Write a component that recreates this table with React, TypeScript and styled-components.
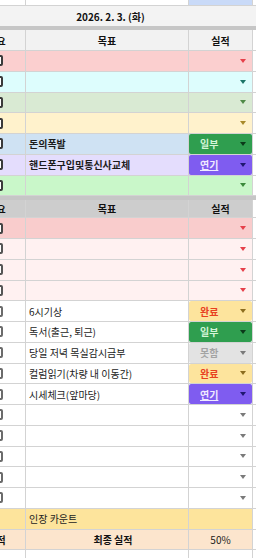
import React, { FC } from 'react';
import styled, { createGlobalStyle } from 'styled-components';

type Status = '완료' | '일부' | '못함' | '연기';

const STATUS: Record<Status, { bg: string; fg: string; arrow: string; underline?: boolean }> = {
  완료: { bg: '#fde49d', fg: '#e8401f', arrow: '#8c6d1f' },
  일부: { bg: '#2f9e4f', fg: '#d5f5d8', arrow: '#0b3a1a' },
  못함: { bg: '#e3e3e3', fg: '#a3a3a3', arrow: '#7a7a7a' },
  연기: { bg: '#7f5cf0', fg: '#efeaff', arrow: '#1f1770', underline: true },
};

type Task = {
  bg?: string;
  arrow?: string;
  text?: string;
  bold?: boolean;
  status?: Status;
  box?: string;
};

const RED = '#e6404a';
const GRAY = '#7a7a7a';

const morning: Task[] = [
  { bg: '#fbcfcf', arrow: RED, box: '#3a3a3a' },
  { bg: '#ddfdfd', arrow: '#1b7568', box: '#3a3a3a' },
  { bg: '#d9ead3', arrow: '#4f8a47', box: '#3a3a3a' },
  { bg: '#fff2cc', arrow: '#a88a2a', box: '#3a3a3a' },
  { bg: '#cfe2f3', text: '돈의폭발', bold: true, status: '일부', box: '#3a3a3a' },
  { bg: '#e4ddfd', text: '핸드폰구입및통신사교체', bold: true, status: '연기', box: '#3a3a3a' },
  { bg: '#c9f7c9', arrow: '#3b8a3b', box: '#3a3a3a' },
];

const daily: Task[] = [
  { bg: '#f9cccc', arrow: RED, box: '#444' },
  { bg: '#fff1f1', arrow: RED, box: '#555' },
  { bg: '#fff1f1', arrow: RED, box: '#555' },
  { bg: '#fff1f1', arrow: RED, box: '#555' },
  { text: '6시기상', status: '완료' },
  { text: '독서(출근, 퇴근)', status: '일부' },
  { text: '당일 저녁 목실감시금부', status: '못함' },
  { text: '컬럼읽기(차량 내 이동간)', status: '완료' },
  { text: '시세체크(앞마당)', status: '연기' },
  { arrow: GRAY },
  { arrow: GRAY },
  { arrow: GRAY },
  { arrow: GRAY },
  { arrow: GRAY },
];

const GlobalStyle = createGlobalStyle`
  html, body {
    margin: 0;
    padding: 0;
    background: #fff;
    overflow: hidden;
  }
  body {
    font-family: "Noto Sans CJK KR", "Noto Sans", sans-serif;
    font-size: 10px;
    color: #1c1c1c;
  }
`;

const Sheet = styled.div`
  margin-left: -32px;
  width: 288px;
`;

const Row = styled.div<{ $bg?: string; $h?: number }>`
  display: grid;
  grid-template-columns: 58px 163px 64px 1fr;
  height: ${p => p.$h ?? 20.75}px;
  background: ${p => p.$bg ?? '#fff'};
`;

const Cell = styled.div<{ $align?: 'left' | 'center' | 'right' }>`
  display: flex;
  align-items: center;
  justify-content: ${p =>
    p.$align === 'center' ? 'center' : p.$align === 'right' ? 'flex-end' : 'flex-start'};
  min-width: 0;
  overflow: hidden;
  white-space: nowrap;
  border-right: 1px solid #d3d3d3;
  border-bottom: 1px solid #d3d3d3;
`;

const Spare = styled(Cell)`
  background: #fff;
  border-right: none;
`;

const TopCell = styled(Cell)<{ $fill?: string }>`
  background: ${p => p.$fill ?? '#fff'};
`;

const DateCell = styled.div`
  grid-column: 1 / -1;
  display: flex;
  align-items: center;
  justify-content: center;
  padding-right: 3px;
  background: #f3f3f3;
  font-weight: 700;
  color: #111;
`;

const Band = styled.div`
  height: 4px;
  background: #c6c6c6;
`;

const HeadCell = styled(Cell)`
  justify-content: center;
  font-weight: 700;
  color: #111;
`;

const TextCell = styled(Cell)<{ $bold?: boolean }>`
  padding-left: 3px;
  font-weight: ${p => (p.$bold ? 700 : 400)};
`;

const BoxCell = styled(Cell)`
  justify-content: center;
`;

const Checkbox = styled.div<{ $color: string }>`
  width: 11px;
  height: 11px;
  box-sizing: border-box;
  margin-left: 2px;
  border: 2px solid ${p => p.$color};
  border-radius: 2px;
  background: #fff;
`;

const PickCell = styled(Cell)`
  justify-content: flex-end;
  padding-right: 6px;
`;

const ChipCell = styled(Cell)`
  align-items: stretch;
`;

const Chip = styled.div<{ $bg: string }>`
  flex: 1;
  display: flex;
  align-items: center;
  padding: 0 6px 0 11px;
  background: ${p => p.$bg};
  border-radius: 2px;
`;

const ChipLabel = styled.span<{ $fg: string; $underline?: boolean }>`
  flex: 1;
  font-weight: 700;
  color: ${p => p.$fg};
  text-decoration: ${p => (p.$underline ? 'underline' : 'none')};
  text-underline-offset: 1px;
`;

const Arrow = styled.span<{ $color: string }>`
  width: 0;
  height: 0;
  border-left: 3.5px solid transparent;
  border-right: 3.5px solid transparent;
  border-top: 4px solid ${p => p.$color};
`;

const HeaderRow: FC<{ bg: string; h: number }> = ({ bg, h }) => (
  <Row $bg={bg} $h={h}>
    <HeadCell>중요</HeadCell>
    <HeadCell>목표</HeadCell>
    <HeadCell>실적</HeadCell>
    <Spare />
  </Row>
);

const TaskRow: FC<{ task: Task }> = ({ task }) => {
  const st = task.status ? STATUS[task.status] : null;
  return (
    <Row $bg={task.bg}>
      <BoxCell>
        <Checkbox $color={task.box ?? '#6b6b6b'} />
      </BoxCell>
      <TextCell $bold={task.bold}>{task.text}</TextCell>
      {st ? (
        <ChipCell>
          <Chip $bg={st.bg}>
            <ChipLabel $fg={st.fg} $underline={st.underline}>
              {task.status}
            </ChipLabel>
            <Arrow $color={st.arrow} />
          </Chip>
        </ChipCell>
      ) : (
        <PickCell>
          <Arrow $color={task.arrow ?? GRAY} />
        </PickCell>
      )}
      <Spare />
    </Row>
  );
};

const SummaryLabel = styled(Cell)`
  justify-content: center;
  padding-left: 12px;
  font-weight: 700;
  color: #111;
`;

export default function App() {
  return (
    <>
      <GlobalStyle />
      <Sheet>
        <Row $h={6}>
          <TopCell />
          <TopCell />
          <TopCell $fill="#c9daf8" />
          <Spare />
        </Row>
        <Row $h={20}>
          <DateCell>2026. 2. 3. (화)</DateCell>
        </Row>
        <Band />
        <HeaderRow bg="#f2f2f2" h={21} />
        {morning.map((t, i) => (
          <TaskRow key={`m${i}`} task={t} />
        ))}
        <Band />
        <HeaderRow bg="#cdcdcd" h={18} />
        {daily.map((t, i) => (
          <TaskRow key={`d${i}`} task={t} />
        ))}
        <Row $bg="#fde49c">
          <Cell />
          <TextCell>인장 카운트</TextCell>
          <Cell />
          <Spare />
        </Row>
        <Row $bg="#fce5cd">
          <HeadCell>실적</HeadCell>
          <SummaryLabel>최종 실적</SummaryLabel>
          <Cell $align="center">50%</Cell>
          <Spare />
        </Row>
        <Row>
          <Cell />
          <Cell />
          <Cell />
          <Spare />
        </Row>
      </Sheet>
    </>
  );
}
